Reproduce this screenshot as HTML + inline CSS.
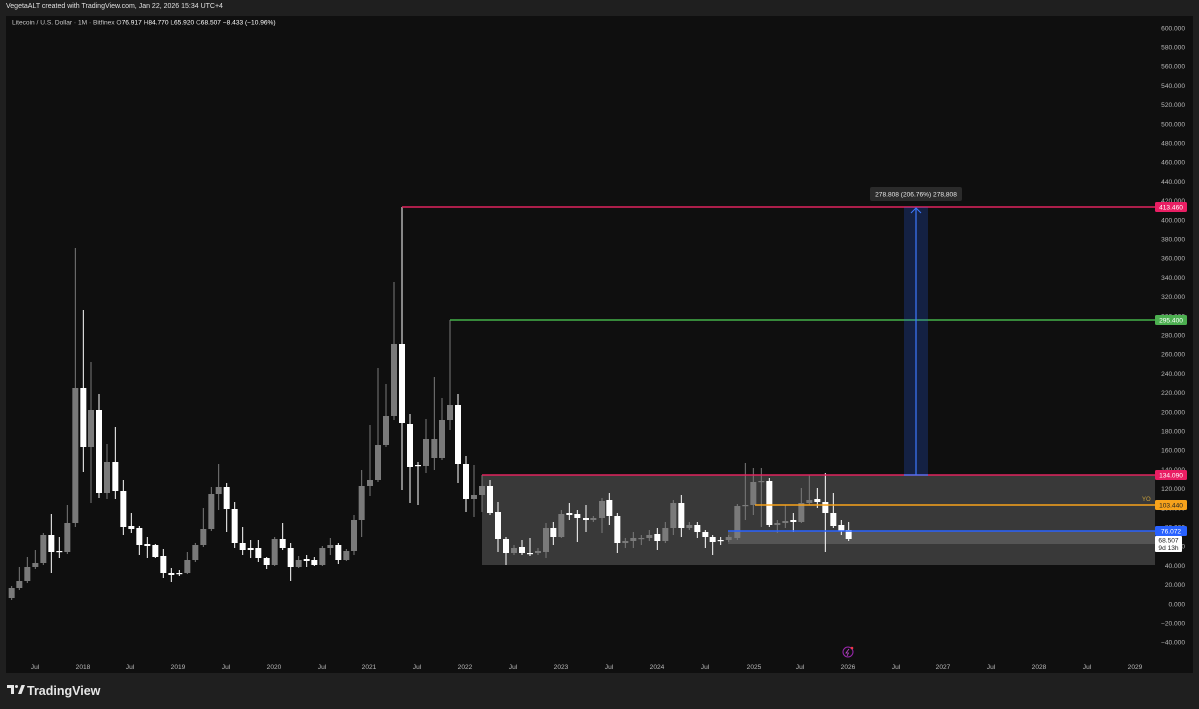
<!DOCTYPE html>
<html><head><meta charset="utf-8"><style>
html,body{margin:0;padding:0;background:#1f1f1f;width:1199px;height:709px;overflow:hidden;font-family:"Liberation Sans",sans-serif}
#hdr{position:absolute;left:6px;top:3px;font-size:7px;color:#e0e0e0}
svg{position:absolute;left:0;top:0}
</style></head><body>
<div id="hdr">VegetaALT created with TradingView.com, Jan 22, 2026 15:34 UTC+4</div>
<svg id="s" width="1199" height="709" xmlns="http://www.w3.org/2000/svg" font-family="Liberation Sans, sans-serif">
<rect x="6" y="16" width="1187" height="657" fill="#0f0f0f"/>
<text x="12" y="24.5" font-size="6.6" fill="#c8c8c8">Litecoin / U.S. Dollar · 1M · Bitfinex  O<tspan fill="#fff">76.917</tspan>  H<tspan fill="#fff">84.770</tspan>  L<tspan fill="#fff">65.920</tspan>  C<tspan fill="#fff">68.507</tspan>  <tspan fill="#fff">−8.433 (−10.96%)</tspan></text>
<rect x="482" y="475" width="673" height="90" fill="#393939"/>
<rect x="728" y="531" width="427" height="13" fill="#555"/>
<g id="c"></g>
<line x1="402" y1="207" x2="1155" y2="207" stroke="#e0245e" stroke-width="1.6"/>
<line x1="450" y1="320" x2="1155" y2="320" stroke="#43b048" stroke-width="1.4"/>
<line x1="482" y1="475" x2="1155" y2="475" stroke="#e0245e" stroke-width="1.6"/>
<line x1="755" y1="505" x2="1155" y2="505" stroke="#f7a21b" stroke-width="1.6"/>
<line x1="728" y1="531" x2="1155" y2="531" stroke="#2962ff" stroke-width="1.6"/>
<text x="1142" y="501" font-size="6" fill="#c9a03a">YO</text>
<rect x="904" y="207" width="24" height="268" fill="#2962ff" fill-opacity="0.22"/>
<line x1="916" y1="208" x2="916" y2="475" stroke="#3c78ff" stroke-width="1.2"/>
<polyline points="911,213 916,208 921,213" fill="none" stroke="#3c78ff" stroke-width="1"/>
<line x1="904" y1="475" x2="928" y2="475" stroke="#3c78ff" stroke-width="1.2"/>
<rect x="870" y="187" width="92" height="14" rx="2" fill="#2b2b2b"/>
<text x="916" y="196.5" font-size="6.6" fill="#e8e8e8" text-anchor="middle">278.808 (206.76%) 278,808</text>
<g id="ax" font-size="6.6" fill="#b8b8b8"></g>
<g id="tags" font-size="6.6"></g>
<circle cx="848" cy="652" r="5" fill="none" stroke="#9c27b0" stroke-width="1"/>
<path d="M849,649 L846,653 L848.5,653 L847,656" fill="none" stroke="#c04fd0" stroke-width="0.8"/>
<circle cx="852" cy="648" r="1.3" fill="#f23645"/>
<g transform="translate(7,685)" fill="#e6e6e6">
<path d="M0,0 H7 V9 H4 V3 H0 Z"/><circle cx="9.5" cy="1.5" r="1.5"/><path d="M11,9 L14.5,0 H18 L14.5,9 Z"/>
</g>
<text x="27" y="695" font-size="12.5" fill="#e6e6e6" font-weight="bold">TradingView</text>
</svg>
<script>
var S="http://www.w3.org/2000/svg";
function el(t,a,p){var e=document.createElementNS(S,t);for(var k in a)e.setAttribute(k,a[k]);(p||document.getElementById('s')).appendChild(e);return e;}
var z4=[[35,588,598,586,600,0],[58,581,588,567,590,0],[82,567,581,557,583,0],[106,563,567,550,569,0],[130,535,563,533,565,0],[154,535,552,514,573,1],[178,551,552,537,558,1],[202,523,552,505,554,0],[226,388,523,248,527,0],[250,388,447,310,472,1],[273,410,447,362,503,0],[297,410,493,394,498,1],[321,462,493,444,499,0],[346,462,491,427,499,1],[370,491,527,480,535,1],[394,526,529,513,533,1],[418,528,545,526,555,1],[442,544,546,537,558,1],[466,545,557,544,558,1],[490,556,573,549,578,1],[514,573,575,568,582,1],[538,573,574,570,576,1],[562,560,573,552,574,0],[586,545,560,543,562,0],[610,529,545,508,547,0],[634,494,529,487,531,0],[656,487,494,464,510,0],[680,487,509,483,532,1],[704,509,543,502,548,1],[728,543,550,527,555,1],[752,548,550,540,558,1],[775,548,558,540,562,1],[800,558,565,557,569,1],[824,539,565,537,566,0],[848,539,548,523,550,1],[872,548,567,543,581,1],[896,560,567,556,568,0],[920,559,561,555,567,1],[943,560,565,557,566,1],[967,548,565,546,566,0],[991,545,548,538,555,0],[1015,545,560,543,564,1],[1039,551,560,549,561,0],[1062,520,551,515,555,0],[1085,486,520,470,537,0],[1110,480,486,425,496,0],[1134,445,480,368,482,0],[1158,416,445,384,447,0],[1182,344,416,282,420,0]];
var z5=[[186,344,423,207,490,1],[210,424,467,414,503,1],[234,465,466,462,505,1],[258,439,466,419,473,0],[283,439,458,377,470,0],[306,420,458,398,460,0],[330,405,420,320,430,0],[354,405,464,394,483,1],[378,464,499,456,512,1],[402,495,499,465,517,0],[426,486,495,475,512,0],[450,486,513,480,515,1],[474,512,539,502,552,1],[498,539,553,537,565,1],[522,548,553,545,555,0],[546,547,553,540,555,1],[570,553,554,538,556,1],[594,551,553,548,555,0],[618,528,552,523,558,0],[640,528,537,522,545,1],[664,514,537,510,538,0],[688,513,515,503,520,1],[712,514,518,510,542,1],[738,518,520,505,532,1],[760,518,520,516,522,0],[786,501,518,498,533,0],[808,500,516,493,525,1],[832,516,543,513,553,1],[856,541,543,538,548,0],[880,538,541,532,548,0],[904,538,539,535,545,0],[928,535,538,530,541,0],[952,534,541,528,550,1],[976,528,541,522,543,0],[1000,503,528,500,535,0],[1024,503,528,495,537,1],[1048,525,528,522,530,0],[1072,525,532,522,538,1],[1096,532,537,530,548,1],[1118,537,542,535,555,1],[1142,540,541,537,545,1],[1166,537,540,535,542,0]];
var z6=[[112,506,538,504,540,0],[136,505,506,463,520,0],[160,482,505,468,515,0],[184,481,482,468,527,0],[208,481,525,478,527,1],[232,523,525,520,533,0],[256,521,523,505,528,0],[280,520,522,513,532,1],[304,503,522,488,523,0],[328,500,503,475,505,0],[352,499,502,488,508,1],[376,502,513,473,552,1],[400,513,526,493,528,1],[424,525,531,520,535,1],[446,530,539,522,541,1]];
var g=document.getElementById('c'),all=[];
z4.forEach(function(d){all.push([d[0]/3].concat(d.slice(1)));});
z5.forEach(function(d){all.push([340+d[0]/3].concat(d.slice(1)));});
z6.forEach(function(d){all.push([700+d[0]/3].concat(d.slice(1)));});
all.forEach(function(d){var x=d[0],col=d[5]?'#ffffff':'#7a7a7a';
el('line',{x1:x,x2:x,y1:d[3],y2:d[4],stroke:col,'stroke-width':1},g);
el('rect',{x:x-3,y:d[1],width:6,height:Math.max(1.2,d[2]-d[1]),fill:col},g);});
var ax=document.getElementById('ax');
for(var p=600;p>=-40;p-=20){var y=604-0.96*p;var t=el('text',{x:1185,y:y+2.3,'text-anchor':'end'},ax);t.textContent=(p<0?'−'+(-p):p)+'.000';}
var tl=[[35,'Jul'],[83,'2018'],[130,'Jul'],[178,'2019'],[226,'Jul'],[274,'2020'],[322,'Jul'],[369,'2021'],[417,'Jul'],[465,'2022'],[513,'Jul'],[561,'2023'],[609,'Jul'],[657,'2024'],[705,'Jul'],[754,'2025'],[800,'Jul'],[848,'2026'],[896,'Jul'],[943,'2027'],[991,'Jul'],[1039,'2028'],[1087,'Jul'],[1135,'2029']];
tl.forEach(function(d){var t=el('text',{x:d[0],y:669,'text-anchor':'middle'},ax);t.textContent=d[1];});
var tg=document.getElementById('tags');
[[207,'413.460','#e91e63','#fff'],[320,'295.400','#4caf50','#fff'],[475,'134.090','#e91e63','#fff'],[505,'103.440','#f7a21b','#222'],[531,'76.072','#2962ff','#fff']].forEach(function(d){
el('rect',{x:1155,y:d[0]-5,width:32,height:10,rx:1.5,fill:d[2]},tg);var t=el('text',{x:1171,y:d[0]+2.4,'text-anchor':'middle',fill:d[3]},tg);t.textContent=d[1];});
el('rect',{x:1155,y:536,width:27,height:16,rx:1,fill:'#fff'},tg);
var a=el('text',{x:1168.5,y:542.5,'text-anchor':'middle',fill:'#222'},tg);a.textContent='68.507';
var b=el('text',{x:1168.5,y:550,'text-anchor':'middle',fill:'#222'},tg);b.textContent='9d 13h';
</script>
</body></html>
